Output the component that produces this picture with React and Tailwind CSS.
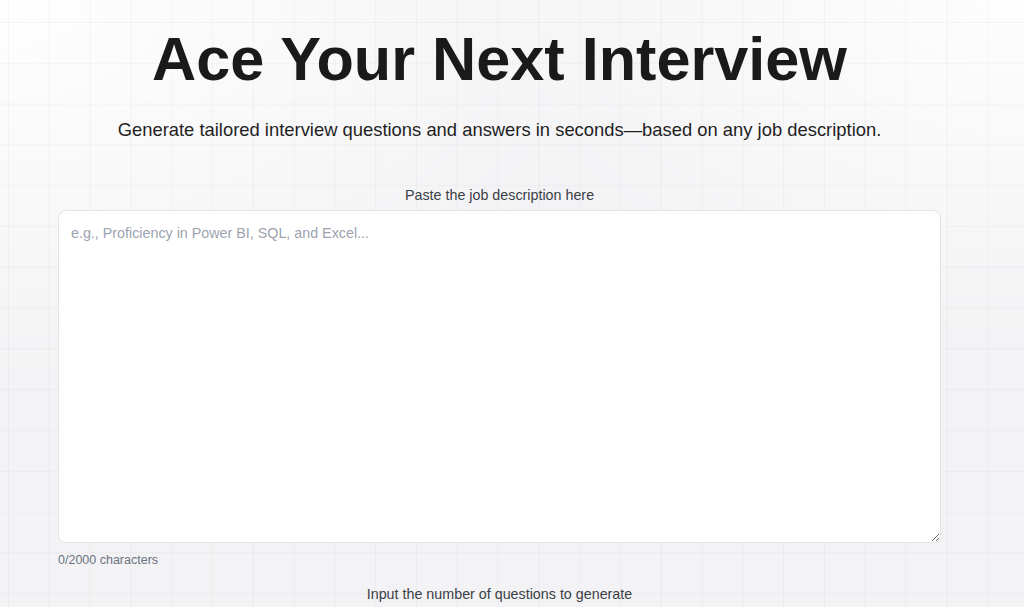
export default function App() {
  return (
    <div className="min-h-[607px] w-full bg-[#f3f3f5] font-['Liberation_Sans',Arial,sans-serif]">
      <div className="min-h-[607px] w-full bg-[radial-gradient(ellipse_at_0%_0%,rgba(255,255,255,0.95),rgba(255,255,255,0)_45%),radial-gradient(ellipse_at_100%_0%,rgba(255,255,255,0.9),rgba(255,255,255,0)_40%)]">
        <div className="min-h-[607px] w-full bg-[linear-gradient(to_right,rgba(0,0,0,0.032)_1px,transparent_1px),linear-gradient(to_bottom,rgba(0,0,0,0.032)_1px,transparent_1px)] bg-[size:40.8px_40.8px] bg-[position:8px_22px]">
          <div className="w-[999px] flex flex-col items-center pt-[29px] px-[58px]">
            <h1 className="text-[61.2px] leading-none font-bold text-[#1a1a1a]">
              Ace Your Next Interview
            </h1>
            <p className="mt-[26px] text-[18.4px] leading-[28px] text-[#1f1f1f]">
              Generate tailored interview questions and answers in seconds—based on any job description.
            </p>
            <label className="mt-[41px] text-[14.3px] leading-[20px] text-[#3a3f47]">
              Paste the job description here
            </label>
            <textarea
              className="mt-[5px] w-full h-[333px] rounded-lg border border-[#e2e3e6] bg-white p-3 text-[14.3px] leading-[20px] text-[#1f2937] placeholder:text-[#9ca3af] outline-none"
              placeholder="e.g., Proficiency in Power BI, SQL, and Excel..."
            />
            <div className="self-start mt-[9px] text-[12.5px] leading-[16px] text-[#6b7280]">
              0/2000 characters
            </div>
            <label className="mt-[16px] text-[14.3px] leading-[20px] text-[#3a3f47]">
              Input the number of questions to generate
            </label>
          </div>
        </div>
      </div>
    </div>
  );
}
